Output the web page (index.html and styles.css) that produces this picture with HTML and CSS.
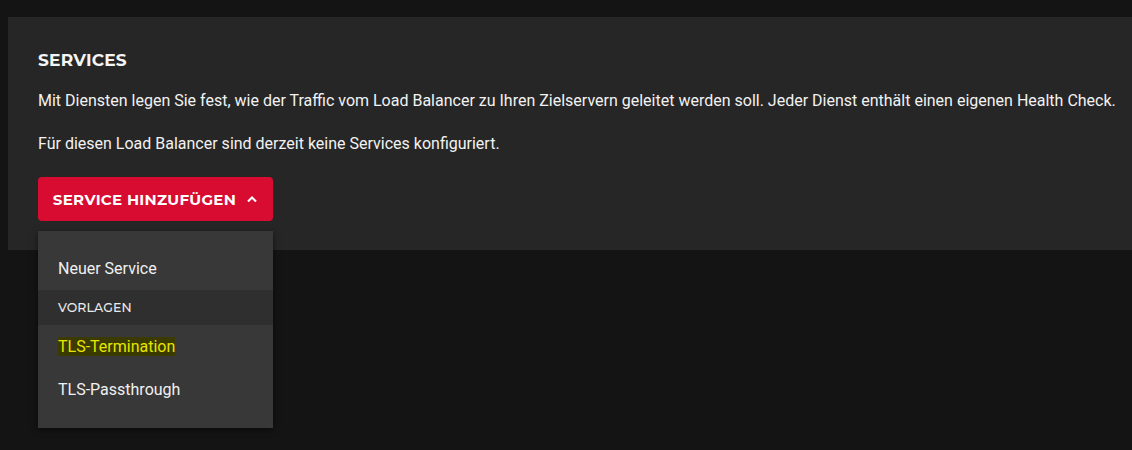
FILE: index.html
```html
<!DOCTYPE html>
<html lang="de">
<head>
<meta charset="utf-8">
<title>Services</title>
<link rel="stylesheet" href="styles.css">
</head>
<body>
<div class="page">
  <section class="panel">
    <h2 class="title">SERVICES</h2>
    <p class="text">Mit Diensten legen Sie fest, wie der Traffic vom Load Balancer zu Ihren Zielservern geleitet werden soll. Jeder Dienst enthält einen eigenen Health Check.</p>
    <p class="text">Für diesen Load Balancer sind derzeit keine Services konfiguriert.</p>
    <div class="menu-wrap">
      <button class="btn">SERVICE HINZUFÜGEN
        <svg class="chev" width="12" height="8" viewBox="0 0 12 8"><path d="M2 6.5 L6 2.5 L10 6.5" fill="none" stroke="#fff" stroke-width="2"/></svg>
      </button>
      <div class="dropdown">
        <div class="item">Neuer Service</div>
        <div class="group">VORLAGEN</div>
        <div class="item"><span class="mark">TLS-Termination</span></div>
        <div class="item">TLS-Passthrough</div>
      </div>
    </div>
  </section>
</div>
</body>
</html>
```
FILE: styles.css
```css
html, body { margin: 0; padding: 0; }
body {
  background: #141414;
  font-family: Roboto, "Liberation Sans", sans-serif;
  color: #f2f2f2;
  width: 1132px;
  height: 450px;
  overflow: hidden;
}
.page { padding: 17px 0 0 8px; }
.panel {
  background: #262626;
  height: 233px;
  box-sizing: border-box;
  padding: 33px 0 0 30px;
}
.title {
  margin: 0;
  font-family: "Montserrat", Lato, "Open Sans", sans-serif;
  font-weight: 700;
  font-size: 17px;
  line-height: 20px;
  letter-spacing: 0.2px;
  color: #f4f4f4;
}
.text {
  margin: 20px 0 0 0;
  font-size: 16px;
  line-height: 22px;
  white-space: nowrap;
}
.text + .text { margin-top: 21px; }
.menu-wrap { position: relative; margin-top: 22px; width: 235px; }
.btn {
  width: 235px;
  height: 44px;
  background: #d80c30;
  border: none;
  border-radius: 4px;
  color: #fff;
  font-family: "Montserrat", Lato, "Open Sans", sans-serif;
  font-weight: 700;
  font-size: 15px;
  letter-spacing: 0.3px;
  display: flex;
  align-items: center;
  justify-content: center;
  gap: 10px;
  padding: 0;
}
.chev { display: block; }
.dropdown {
  position: absolute;
  top: 54px;
  left: 0;
  width: 235px;
  background: #383838;
  padding: 16px 0 17px;
  box-shadow: 0 2px 6px rgba(0,0,0,0.5);
}
.item {
  height: 43px;
  display: flex;
  align-items: center;
  padding-left: 20px;
  font-size: 16px;
  color: #f0f0f0;
}
.group {
  height: 35px;
  display: flex;
  align-items: center;
  padding-left: 20px;
  background: #2f2f2f;
  font-family: "Montserrat", Lato, "Open Sans", sans-serif;
  font-size: 12.5px;
  font-weight: 500;
  color: #eaeaea;
  letter-spacing: 0.1px;
}
.mark {
  background: #3b3a00;
  color: #e6e600;
}
```
